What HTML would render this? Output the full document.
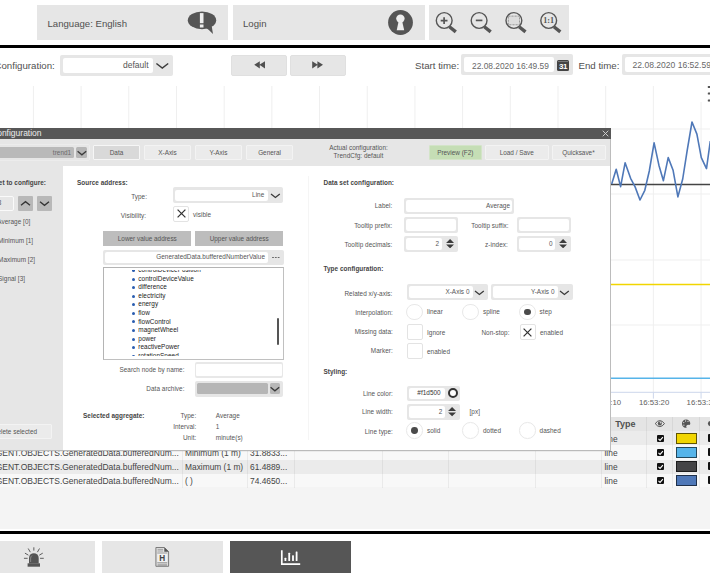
<!DOCTYPE html>
<html><head><meta charset="utf-8"><title>Trend</title>
<style>
*{box-sizing:border-box;margin:0;padding:0}
html,body{width:710px;height:580px;overflow:hidden;background:#fff;font-family:"Liberation Sans",sans-serif;color:#444}
.a{position:absolute}
.t{position:absolute;white-space:nowrap;line-height:1}
.tb{background:#e6e6e6}
.f96{font-size:9.7px;color:#505050}
.f64{font-size:6.4px;color:#555;letter-spacing:0.04px}
.b{font-weight:bold;color:#444}
.r{text-align:right}
.in{position:absolute;background:#fff;border:1px solid #e2e2e2;border-radius:2px;box-shadow:0 0 0 1px #ececec}
.btn{position:absolute;background:#ebebeb;border:1px solid #f3f3f3;border-radius:1px;font-size:6.4px;color:#555;text-align:center}
.dbtn{position:absolute;background:#bdbdbd;font-size:6.4px;color:#555;text-align:center}
.cb{position:absolute;width:16.2px;height:16.2px;background:#fff;border:1.6px solid #e3e3e3;border-radius:2px}
.rd{position:absolute;width:16.6px;height:16.6px;background:#fff;border:1.6px solid #e8e8e8;border-radius:50%}
</style></head><body>
<!-- top bar -->
<div class="a tb" style="left:37px;top:5.2px;width:191.3px;height:34.6px"></div>
<div class="a tb" style="left:233.1px;top:5.2px;width:191.8px;height:34.6px"></div>
<div class="a tb" style="left:429px;top:5.2px;width:139.5px;height:34.6px"></div>
<div class="t f96" style="left:47.5px;top:18.7px;font-size:9.6px">Language: English</div>
<div class="t f96" style="left:243px;top:18.7px;font-size:9.6px">Login</div>
<div class="a" style="left:0;top:45.4px;width:710px;height:2.8px;background:#000"></div>
<svg class="a" style="left:0;top:0" width="710" height="45" viewBox="0 0 710 45"><ellipse cx="202" cy="20.3" rx="14.2" ry="8.9" fill="#555"/><path d="M205.5 27.5 Q209.5 30 213 34 Q212.3 30 211.8 26.5 Z" fill="#555"/><rect x="199.9" y="13.1" width="3.6" height="10.1" fill="#eee"/><rect x="199.9" y="24.5" width="3.6" height="3" fill="#eee"/><circle cx="400.5" cy="22.5" r="12.4" fill="#555"/><circle cx="400.4" cy="18.6" r="4.2" fill="#eee"/><path d="M398.7 21 L402.1 21 L404.2 30.3 L396.7 30.3 Z" fill="#eee"/><circle cx="444.2" cy="20.5" r="7.9" fill="none" stroke="#555" stroke-width="1.4"/><path d="M449.4 26.7 L455.8 31.9" stroke="#555" stroke-width="3.4" fill="none"/><path d="M440.7 20.6H447.5M444.09999999999997 17.2V24" stroke="#555" stroke-width="1.7" fill="none"/><circle cx="479.1" cy="20.5" r="7.9" fill="none" stroke="#555" stroke-width="1.4"/><path d="M484.3 26.7 L490.70000000000005 31.9" stroke="#555" stroke-width="3.4" fill="none"/><path d="M475.8 20.4H482.40000000000003" stroke="#555" stroke-width="1.7" fill="none"/><circle cx="513.9" cy="20.5" r="7.9" fill="none" stroke="#555" stroke-width="1.4"/><path d="M519.1 26.7 L525.5 31.9" stroke="#555" stroke-width="3.4" fill="none"/><rect x="508.29999999999995" y="16.1" width="11.2" height="8.7" fill="#dcdcdc" stroke="#777" stroke-width="0.7" stroke-dasharray="2.2 0.9"/><circle cx="548.7" cy="20.5" r="7.9" fill="none" stroke="#555" stroke-width="1.4"/><path d="M553.9000000000001 26.7 L560.3000000000001 31.9" stroke="#555" stroke-width="3.4" fill="none"/><text x="548.7" y="23.3" text-anchor="middle" font-family="Liberation Serif, serif" font-weight="bold" font-size="8.2" fill="#555">1:1</text></svg>
<!-- config row -->

<div class="t f96 r" style="left:-50px;width:104.8px;top:60.7px">Configuration:</div>
<div class="a" style="left:60px;top:54.6px;width:113.2px;height:21.2px;background:#e6e6e6;border-radius:2px"></div>
<div class="a" style="left:62.9px;top:57.5px;width:90.5px;height:15.3px;background:#fff;border-radius:2px"></div>
<div class="t r" style="left:63px;top:61px;width:85.5px;font-size:8.5px;color:#555">default</div>
<svg class="a" style="left:154px;top:60px" width="16" height="10" viewBox="0 0 16 10"><path d="M2.4 3.5 L8.3 8.1 L14.2 3.5" fill="none" stroke="#3c3c3c" stroke-width="1.5"/></svg>
<div class="a" style="left:230.8px;top:54.6px;width:56.3px;height:21.1px;background:#e6e6e6;border:1px solid #e0e0e0;border-radius:2px"></div>
<div class="a" style="left:290px;top:54.6px;width:56.2px;height:21.1px;background:#e6e6e6;border:1px solid #e0e0e0;border-radius:2px"></div>
<svg class="a" style="left:253.8px;top:61.4px" width="11.2" height="7.6" viewBox="0 0 11.2 7.6"><path d="M5.8 0.2V7.4L0.2 3.8Z M11 0.2V7.4L5.4 3.8Z" fill="#505050"/></svg>
<svg class="a" style="left:312.3px;top:61.4px" width="11.2" height="7.6" viewBox="0 0 11.2 7.6"><path d="M0.2 0.2V7.4L5.8 3.8Z M5.4 0.2V7.4L11 3.8Z" fill="#505050"/></svg>
<div class="t f96" style="left:415px;top:60.7px">Start time:</div>
<div class="a" style="left:461px;top:54.4px;width:112.4px;height:21px;background:#e6e6e6;border-radius:2px"></div>
<div class="a" style="left:464px;top:57.3px;width:89.7px;height:15.2px;background:#fff;border-radius:2px"></div>
<div class="t" style="left:472px;top:61.5px;font-size:8.4px;color:#686868">22.08.2020 16:49.59</div>
<div class="a" style="left:557.3px;top:60px;width:11.6px;height:10.6px;background:#444;border-radius:1.5px"></div>
<div class="t" style="left:557.3px;top:62.6px;width:11.6px;height:8px;font-size:8px;font-weight:bold;color:#fff;text-align:center;line-height:8px;letter-spacing:-0.4px">31</div><div class="a" style="left:558.3px;top:60.6px;width:9.6px;height:1px;background:#777"></div>
<div class="t f96" style="left:578.5px;top:60.7px">End time:</div>
<div class="a" style="left:622px;top:54.4px;width:100px;height:21px;background:#e6e6e6;border-radius:2px"></div>
<div class="a" style="left:625px;top:57.3px;width:100px;height:15.2px;background:#fff;border-radius:2px"></div>
<div class="t" style="left:632.5px;top:61.4px;font-size:8.55px;color:#686868">22.08.2020 16:52.59</div>

<!-- chart -->
<svg class="a" style="left:0;top:80px" width="710" height="340" viewBox="0 80 710 340"><rect x="32.90" y="86" width="1" height="306" fill="#efefef"/><rect x="80.59" y="86" width="1" height="306" fill="#efefef"/><rect x="128.28" y="86" width="1" height="306" fill="#efefef"/><rect x="175.97" y="86" width="1" height="306" fill="#efefef"/><rect x="223.66" y="86" width="1" height="306" fill="#efefef"/><rect x="271.35" y="86" width="1" height="306" fill="#efefef"/><rect x="319.04" y="86" width="1" height="306" fill="#efefef"/><rect x="366.73" y="86" width="1" height="306" fill="#efefef"/><rect x="414.42" y="86" width="1" height="306" fill="#efefef"/><rect x="462.11" y="86" width="1" height="306" fill="#efefef"/><rect x="509.80" y="86" width="1" height="306" fill="#efefef"/><rect x="557.49" y="86" width="1" height="306" fill="#efefef"/><rect x="605.18" y="86" width="1" height="306" fill="#efefef"/><rect x="652.87" y="86" width="1" height="306" fill="#efefef"/><rect x="700.56" y="86" width="1" height="306" fill="#efefef"/><line x1="0" y1="129" x2="710" y2="129" stroke="#efefef" stroke-width="1"/><line x1="0" y1="194" x2="710" y2="194" stroke="#efefef" stroke-width="1"/><line x1="0" y1="260" x2="710" y2="260" stroke="#efefef" stroke-width="1"/><line x1="0" y1="325" x2="710" y2="325" stroke="#efefef" stroke-width="1"/><line x1="0" y1="392.3" x2="710" y2="392.3" stroke="#ccd6eb" stroke-width="1"/><line x1="0" y1="184.6" x2="710" y2="184.6" stroke="#444" stroke-width="1.5"/><polyline fill="none" stroke="#4f78b8" stroke-width="1.6" stroke-linejoin="round" points="611.7,184.1 616.2,169.3 620.6,186.6 625.1,162.8 630.6,178.3 635.1,186.9 640.0,200.0 644.8,190.3 649.3,171.0 654.1,142.8 658.9,165.2 663.4,180.7 668.2,157.6 673.1,170.3 677.9,196.9 682.7,179.0 687.2,150.3 692.0,122.0 696.9,134.1 701.3,157.6 706.5,168.6 710.3,141.0"/><line x1="0" y1="284.5" x2="710" y2="284.5" stroke="#f1d500" stroke-width="1.5"/><line x1="0" y1="378.3" x2="710" y2="378.3" stroke="#56b4e9" stroke-width="1.5"/><rect x="32.90" y="392.3" width="1" height="6.3" fill="#ccd6eb"/><rect x="80.59" y="392.3" width="1" height="6.3" fill="#ccd6eb"/><rect x="128.28" y="392.3" width="1" height="6.3" fill="#ccd6eb"/><rect x="175.97" y="392.3" width="1" height="6.3" fill="#ccd6eb"/><rect x="223.66" y="392.3" width="1" height="6.3" fill="#ccd6eb"/><rect x="271.35" y="392.3" width="1" height="6.3" fill="#ccd6eb"/><rect x="319.04" y="392.3" width="1" height="6.3" fill="#ccd6eb"/><rect x="366.73" y="392.3" width="1" height="6.3" fill="#ccd6eb"/><rect x="414.42" y="392.3" width="1" height="6.3" fill="#ccd6eb"/><rect x="462.11" y="392.3" width="1" height="6.3" fill="#ccd6eb"/><rect x="509.80" y="392.3" width="1" height="6.3" fill="#ccd6eb"/><rect x="557.49" y="392.3" width="1" height="6.3" fill="#ccd6eb"/><rect x="605.18" y="392.3" width="1" height="6.3" fill="#ccd6eb"/><rect x="652.87" y="392.3" width="1" height="6.3" fill="#ccd6eb"/><rect x="700.56" y="392.3" width="1" height="6.3" fill="#ccd6eb"/><g font-family="Liberation Sans, sans-serif" font-size="7.8" fill="#606060" text-anchor="middle"><text x="606" y="405.1">16:53:10</text><text x="654.1" y="405.1">16:53:20</text><text x="701.8" y="405.1">16:53:30</text></g><rect x="696" y="83" width="16" height="19" fill="#fff"/><g fill="#555"><rect x="707.8" y="85.9" width="6" height="2" rx="0.5"/><rect x="707.8" y="92.6" width="6" height="2" rx="0.5"/><rect x="707.8" y="99.4" width="6" height="2" rx="0.5"/></g></svg>
<!-- table -->
<div class="a" style="left:0;top:417px;width:710px;height:14.2px;background:#e4e4e4"></div><div class="a" style="left:0;top:431.2px;width:710px;height:14.2px;background:#ebebeb"></div><div class="a" style="left:0;top:445.4px;width:710px;height:14.2px;background:#f8f8f8"></div><div class="a" style="left:0;top:459.5px;width:710px;height:14.2px;background:#ebebeb"></div><div class="a" style="left:0;top:473.6px;width:710px;height:14.2px;background:#f8f8f8"></div><div class="a" style="left:0;top:487.3px;width:710px;height:42px;background:#f4f4f4"></div><div class="a" style="left:181.6px;top:417px;width:1px;height:70.5px;background:rgba(0,0,0,0.055)"></div><div class="a" style="left:246.6px;top:417px;width:1px;height:70.5px;background:rgba(0,0,0,0.055)"></div><div class="a" style="left:293.6px;top:417px;width:1px;height:70.5px;background:rgba(0,0,0,0.055)"></div><div class="a" style="left:382.1px;top:417px;width:1px;height:70.5px;background:rgba(0,0,0,0.055)"></div><div class="a" style="left:448.1px;top:417px;width:1px;height:70.5px;background:rgba(0,0,0,0.055)"></div><div class="a" style="left:535.1px;top:417px;width:1px;height:70.5px;background:rgba(0,0,0,0.055)"></div><div class="a" style="left:601.1px;top:417px;width:1px;height:70.5px;background:rgba(0,0,0,0.055)"></div><div class="a" style="left:646.1px;top:417px;width:1px;height:70.5px;background:rgba(0,0,0,0.055)"></div><div class="a" style="left:672.1px;top:417px;width:1px;height:70.5px;background:rgba(0,0,0,0.055)"></div><div class="a" style="left:698.6px;top:417px;width:1px;height:70.5px;background:rgba(0,0,0,0.055)"></div><div class="t" style="left:-10px;top:434.9px;font-size:8.5px;color:#444">AGENT.OBJECTS.GeneratedData.bufferedNum...</div><div class="t" style="left:185px;top:434.9px;font-size:8.4px;color:#444">Average (1 m)</div><div class="t" style="left:250px;top:434.9px;font-size:8.4px;color:#444">46.0178...</div><div class="t" style="left:604.5px;top:434.9px;font-size:8.4px;color:#444">line</div><div class="a" style="left:656.9px;top:434.6px;width:7.4px;height:7.2px;background:#111;border-radius:1px"></div><svg class="a" style="left:656.9px;top:434.5px" width="7.4" height="7.4" viewBox="0 0 8 8"><path d="M1.6 4.2 L3.3 5.8 L6.4 2.2" fill="none" stroke="#fff" stroke-width="1.2"/></svg><div class="a" style="left:676.2px;top:432.9px;width:20.9px;height:11.2px;background:#f1d500;border:1px solid rgba(0,0,0,0.6)"></div><div class="a" style="left:707.5px;top:434px;width:8px;height:8px;background:#111;border-radius:1px"></div><div class="t" style="left:-10px;top:449.1px;font-size:8.5px;color:#444">AGENT.OBJECTS.GeneratedData.bufferedNum...</div><div class="t" style="left:185px;top:449.1px;font-size:8.4px;color:#444">Minimum (1 m)</div><div class="t" style="left:250px;top:449.1px;font-size:8.4px;color:#444">31.8833...</div><div class="t" style="left:604.5px;top:449.1px;font-size:8.4px;color:#444">line</div><div class="a" style="left:656.9px;top:448.8px;width:7.4px;height:7.2px;background:#111;border-radius:1px"></div><svg class="a" style="left:656.9px;top:448.7px" width="7.4" height="7.4" viewBox="0 0 8 8"><path d="M1.6 4.2 L3.3 5.8 L6.4 2.2" fill="none" stroke="#fff" stroke-width="1.2"/></svg><div class="a" style="left:676.2px;top:447.1px;width:20.9px;height:11.2px;background:#56b4e9;border:1px solid rgba(0,0,0,0.6)"></div><div class="a" style="left:707.5px;top:448.2px;width:8px;height:8px;background:#111;border-radius:1px"></div><div class="t" style="left:-10px;top:463.2px;font-size:8.5px;color:#444">AGENT.OBJECTS.GeneratedData.bufferedNum...</div><div class="t" style="left:185px;top:463.2px;font-size:8.4px;color:#444">Maximum (1 m)</div><div class="t" style="left:250px;top:463.2px;font-size:8.4px;color:#444">61.4889...</div><div class="t" style="left:604.5px;top:463.2px;font-size:8.4px;color:#444">line</div><div class="a" style="left:656.9px;top:462.9px;width:7.4px;height:7.2px;background:#111;border-radius:1px"></div><svg class="a" style="left:656.9px;top:462.8px" width="7.4" height="7.4" viewBox="0 0 8 8"><path d="M1.6 4.2 L3.3 5.8 L6.4 2.2" fill="none" stroke="#fff" stroke-width="1.2"/></svg><div class="a" style="left:676.2px;top:461.2px;width:20.9px;height:11.2px;background:#444446;border:1px solid rgba(0,0,0,0.6)"></div><div class="a" style="left:707.5px;top:462.3px;width:8px;height:8px;background:#111;border-radius:1px"></div><div class="t" style="left:-10px;top:477.3px;font-size:8.5px;color:#444">AGENT.OBJECTS.GeneratedData.bufferedNum...</div><div class="t" style="left:185px;top:477.3px;font-size:8.4px;color:#444">( )</div><div class="t" style="left:250px;top:477.3px;font-size:8.4px;color:#444">74.4650...</div><div class="t" style="left:604.5px;top:477.3px;font-size:8.4px;color:#444">line</div><div class="a" style="left:656.9px;top:477.0px;width:7.4px;height:7.2px;background:#111;border-radius:1px"></div><svg class="a" style="left:656.9px;top:476.9px" width="7.4" height="7.4" viewBox="0 0 8 8"><path d="M1.6 4.2 L3.3 5.8 L6.4 2.2" fill="none" stroke="#fff" stroke-width="1.2"/></svg><div class="a" style="left:676.2px;top:475.3px;width:20.9px;height:11.2px;background:#4f78b8;border:1px solid rgba(0,0,0,0.6)"></div><div class="a" style="left:707.5px;top:476.4px;width:8px;height:8px;background:#111;border-radius:1px"></div><svg class="a" style="left:640px;top:416px" width="70" height="16" viewBox="640 416 70 16"><path d="M655.2 423.6 Q659.8 417.6 664.5 423.6 Q659.8 429.6 655.2 423.6 Z" fill="#e4e4e4" stroke="#555" stroke-width="1"/><circle cx="659.8" cy="423.5" r="2" fill="#555"/><circle cx="660.4" cy="422.8" r="0.7" fill="#ddd"/><path d="M686.1 419.4 A4.2 4.2 0 1 0 686.8 427.75 Q685.6 426.6 686.6 425.4 Q687.6 424.6 689.2 425 Q690.3 425 690.3 423.6 A4.2 4.2 0 0 0 686.1 419.4 Z" fill="#555"/><circle cx="683.7" cy="422.6" r="0.65" fill="#ddd"/><circle cx="685.6" cy="421" r="0.65" fill="#ddd"/><circle cx="688" cy="421.3" r="0.65" fill="#ddd"/><circle cx="683.9" cy="425.2" r="0.65" fill="#ddd"/><circle cx="710.5" cy="423.6" r="2.6" fill="#555"/></svg><div class="t" style="left:615.2px;top:419.6px;font-size:9px;font-weight:bold;color:#505050">Type</div>
<!-- dialog -->
<div class="a" style="left:-5px;top:127.8px;width:616.4px;height:322.2px;background:#e6e6e6;box-shadow:0 1px 0 #bababa,0 2px 0 rgba(0,0,0,0.05);border-right:1px solid #bcbcbc"></div><div class="a" style="left:-5px;top:127.8px;width:616.4px;height:11.1px;background:#575757"></div><div class="t r" style="left:-60px;width:101.6px;top:129px;font-size:8.5px;color:#ececec">Trend configuration</div><svg class="a" style="left:601.8px;top:129.8px" width="7" height="7" viewBox="0 0 7 7"><path d="M0.7 0.7L6.3 6.3M6.3 0.7L0.7 6.3" stroke="#d8d8d8" stroke-width="0.9" fill="none"/></svg><div class="a" style="left:-5px;top:144px;width:95px;height:17px;border:1px solid #ececec;border-radius:2px"></div><div class="a" style="left:-5px;top:146.8px;width:79.2px;height:11px;background:#b9b9b9;border-radius:1.5px"></div><div class="t f64 r" style="left:0;top:149.5px;width:71.2px;color:#6a6a6a">trend1</div><div class="a" style="left:76.4px;top:146.8px;width:10.6px;height:11px;background:#b6b6b6;border-radius:1.5px"></div><svg class="a" style="left:77.3px;top:150px" width="10" height="6" viewBox="0 0 10 6"><path d="M0.6 1.3 L4.9 4.8 L9.2 1.3" fill="none" stroke="#3a3a3a" stroke-width="1.3"/></svg><div class="btn" style="left:93px;top:145px;width:47px;height:15px;line-height:13px;background:#d9d9d9;border-color:#f6f6f6">Data</div><div class="btn" style="left:144px;top:145px;width:47px;height:15px;line-height:13px;">X-Axis</div><div class="btn" style="left:195px;top:145px;width:47px;height:15px;line-height:13px;">Y-Axis</div><div class="btn" style="left:246px;top:145px;width:47px;height:15px;line-height:13px;">General</div><div class="t f64" style="left:308.5px;top:144px;width:100px;text-align:center;line-height:8.4px">Actual configuration:<br>TrendCfg: default</div><div class="btn" style="left:428.5px;top:145px;width:53.5px;height:15px;line-height:13px;background:#c5deb5;border-color:#d3e4c8">Preview (F2)</div><div class="btn" style="left:485px;top:145px;width:63.5px;height:15px;line-height:13px">Load / Save</div><div class="btn" style="left:551.5px;top:145px;width:54px;height:15px;line-height:13px">Quicksave*</div><div class="a" style="left:63px;top:165.7px;width:547.4px;height:284.3px;background:#fff"></div><div class="a" style="left:308.1px;top:176px;width:1px;height:263.6px;background:#f5f5f5"></div><div class="t f64 b r" style="left:-40px;width:86px;top:180px">Data set to configure:</div><div class="a" style="left:-10px;top:195.8px;width:24px;height:15.2px;border:1.2px solid #fafafa;border-radius:2px"></div><div class="t f64" style="left:-2.2px;top:200px">3</div><div class="a" style="left:18px;top:196px;width:15px;height:15px;background:#b8b8b8;border-radius:1px"></div><svg class="a" style="left:20px;top:200px" width="11" height="7" viewBox="0 0 11 6.3"><path d="M1 5 L5.5 1.3 L10 5" fill="none" stroke="#333" stroke-width="1.3"/></svg><div class="a" style="left:37px;top:196px;width:15px;height:15px;background:#b8b8b8;border-radius:1px"></div><svg class="a" style="left:39px;top:200px" width="11" height="7" viewBox="0 0 11 6.3"><path d="M1 1.3 L5.5 5 L10 1.3" fill="none" stroke="#333" stroke-width="1.3"/></svg><div class="t f64 r" style="left:-50px;width:80.3px;top:219.4px">Average [0]</div><div class="t f64 r" style="left:-50px;width:83.2px;top:237.9px">Minimum [1]</div><div class="t f64 r" style="left:-50px;width:85.1px;top:256.6px">Maximum [2]</div><div class="t f64 r" style="left:-50px;width:75.1px;top:276.1px">Signal [3]</div><div class="btn" style="left:-20px;top:424.2px;width:71.6px;height:14.8px;line-height:13.6px;text-align:right;padding-right:13.6px">Delete selected</div><div class="t f64 b" style="left:77px;top:180px">Source address:</div><div class="t f64 r" style="left:100px;width:47px;top:193.5px">Type:</div><div class="t f64 r" style="left:100px;width:46px;top:212.8px">Visibility:</div><div class="a" style="left:173px;top:187.1px;width:110px;height:16px;background:#e6e6e6;border-radius:2px"></div><div class="a" style="left:175px;top:189.6px;width:92.8px;height:11.8px;background:#fff;border-radius:2px"></div><div class="t f64 r" style="left:175px;width:89.3px;top:192.1px">Line</div><svg class="a" style="left:269.5px;top:192px" width="11" height="7" viewBox="0 0 11 7"><path d="M1 2 L5.4 5.5 L9.8 2" fill="none" stroke="#3a3a3a" stroke-width="1.3"/></svg><div class="cb" style="left:173px;top:205.7px"></div><svg class="a" style="left:176.8px;top:209.4px" width="9" height="9" viewBox="0 0 9 9"><path d="M0.6 0.6L8.4 8.4M8.4 0.6L0.6 8.4" stroke="#333" stroke-width="1.25" fill="none"/></svg><div class="t f64" style="left:193px;top:211.5px">visible</div><div class="dbtn" style="left:103.3px;top:230.7px;width:88px;height:15.4px;line-height:15.4px">Lower value address</div><div class="dbtn" style="left:195px;top:230.7px;width:88.3px;height:15.4px;line-height:15.4px">Upper value address</div><div class="a" style="left:103px;top:249.6px;width:180.5px;height:15.2px;background:#e6e6e6;border-radius:2px"></div><div class="a" style="left:105px;top:251.6px;width:163px;height:11.2px;background:#fff;border-radius:2px"></div><div class="t f64 r" style="left:105px;width:160px;top:254px">GeneratedData.bufferedNumberValue</div><div class="a" style="left:272px;top:256.5px;width:1.6px;height:1.6px;background:#666;border-radius:50%;box-shadow:2.8px 0 0 #666,5.6px 0 0 #666"></div><div class="a" style="left:102.5px;top:267px;width:181.4px;height:92.6px;background:#fff;border:1.5px solid #c0c0c0;border-top-color:#b4b4b4;border-left-color:#b4b4b4"></div><div class="a" style="left:104px;top:270.3px;width:178px;height:85.6px;overflow:hidden"><div class="t" style="left:34.30000000000001px;top:-3.06px;font-size:6.4px;letter-spacing:0.05px;color:#222"><span style="position:absolute;left:-6.4px;top:1.9px;width:3px;height:3px;border-radius:50%;background:#2a5db0"></span>controlDevicePosition</div><div class="t" style="left:34.30000000000001px;top:5.50px;font-size:6.4px;letter-spacing:0.05px;color:#222"><span style="position:absolute;left:-6.4px;top:1.9px;width:3px;height:3px;border-radius:50%;background:#2a5db0"></span>controlDeviceValue</div><div class="t" style="left:34.30000000000001px;top:14.06px;font-size:6.4px;letter-spacing:0.05px;color:#222"><span style="position:absolute;left:-6.4px;top:1.9px;width:3px;height:3px;border-radius:50%;background:#2a5db0"></span>difference</div><div class="t" style="left:34.30000000000001px;top:22.62px;font-size:6.4px;letter-spacing:0.05px;color:#222"><span style="position:absolute;left:-6.4px;top:1.9px;width:3px;height:3px;border-radius:50%;background:#2a5db0"></span>electricity</div><div class="t" style="left:34.30000000000001px;top:31.18px;font-size:6.4px;letter-spacing:0.05px;color:#222"><span style="position:absolute;left:-6.4px;top:1.9px;width:3px;height:3px;border-radius:50%;background:#2a5db0"></span>energy</div><div class="t" style="left:34.30000000000001px;top:39.74px;font-size:6.4px;letter-spacing:0.05px;color:#222"><span style="position:absolute;left:-6.4px;top:1.9px;width:3px;height:3px;border-radius:50%;background:#2a5db0"></span>flow</div><div class="t" style="left:34.30000000000001px;top:48.30px;font-size:6.4px;letter-spacing:0.05px;color:#222"><span style="position:absolute;left:-6.4px;top:1.9px;width:3px;height:3px;border-radius:50%;background:#2a5db0"></span>flowControl</div><div class="t" style="left:34.30000000000001px;top:56.86px;font-size:6.4px;letter-spacing:0.05px;color:#222"><span style="position:absolute;left:-6.4px;top:1.9px;width:3px;height:3px;border-radius:50%;background:#2a5db0"></span>magnetWheel</div><div class="t" style="left:34.30000000000001px;top:65.42px;font-size:6.4px;letter-spacing:0.05px;color:#222"><span style="position:absolute;left:-6.4px;top:1.9px;width:3px;height:3px;border-radius:50%;background:#2a5db0"></span>power</div><div class="t" style="left:34.30000000000001px;top:73.98px;font-size:6.4px;letter-spacing:0.05px;color:#222"><span style="position:absolute;left:-6.4px;top:1.9px;width:3px;height:3px;border-radius:50%;background:#2a5db0"></span>reactivePower</div><div class="t" style="left:34.30000000000001px;top:82.54px;font-size:6.4px;letter-spacing:0.05px;color:#222"><span style="position:absolute;left:-6.4px;top:1.9px;width:3px;height:3px;border-radius:50%;background:#2a5db0"></span>rotationSpeed</div></div><div class="a" style="left:276.7px;top:317.5px;width:2.5px;height:27.3px;background:#555;border-radius:1.2px"></div><div class="t f64 r" style="left:100px;width:84.5px;top:367px">Search node by name:</div><div class="a" style="left:194.5px;top:362px;width:88.8px;height:15.8px;background:#e8e8e8;border-radius:2px"></div><div class="a" style="left:196.1px;top:363.6px;width:85.6px;height:12.6px;background:#fff;border-radius:1px"></div><div class="t f64 r" style="left:100px;width:84.5px;top:386px">Data archive:</div><div class="a" style="left:194.5px;top:380.7px;width:88.8px;height:16px;background:#e6e6e6;border-radius:2px"></div><div class="a" style="left:196.7px;top:383px;width:71.3px;height:11.4px;background:#b6b6b6;border-radius:1.5px"></div><div class="a" style="left:270px;top:383px;width:10.2px;height:11.4px;background:#b8b8b8;border-radius:1.5px"></div><svg class="a" style="left:270.3px;top:386.2px" width="10" height="6" viewBox="0 0 10 6"><path d="M0.6 1.3 L4.9 4.8 L9.2 1.3" fill="none" stroke="#3a3a3a" stroke-width="1.3"/></svg><div class="t f64 b" style="left:83px;top:412.5px">Selected aggregate:</div><div class="t f64 r" style="left:150px;width:46.3px;top:412.5px">Type:</div><div class="t f64" style="left:215.8px;top:412.5px">Average</div><div class="t f64 r" style="left:150px;width:46.3px;top:423.8px">Interval:</div><div class="t f64" style="left:215.8px;top:423.8px">1</div><div class="t f64 r" style="left:150px;width:46.3px;top:434.7px">Unit:</div><div class="t f64" style="left:215.8px;top:434.7px">minute(s)</div><div class="t f64 b" style="left:323.5px;top:180.1px">Data set configuration:</div><div class="t f64 r" style="left:292.4px;width:100px;top:202.6px">Label:</div><div class="a" style="left:404px;top:198.2px;width:110px;height:15.7px;background:#e6e6e6;border-radius:2px"></div><div class="a" style="left:406px;top:200.2px;width:106px;height:11.7px;background:#fff;border-radius:2px"></div><div class="t f64 r" style="left:406px;width:104px;top:203.1px">Average</div><div class="t f64 r" style="left:292.4px;width:100px;top:222.8px">Tooltip prefix:</div><div class="a" style="left:404px;top:217.1px;width:53.5px;height:15.8px;background:#e6e6e6;border-radius:2px"></div><div class="a" style="left:406px;top:219.1px;width:49.5px;height:11.8px;background:#fff;border-radius:2px"></div><div class="t f64 r" style="left:408.7px;width:100px;top:222.8px">Tooltip suffix:</div><div class="a" style="left:517.2px;top:217.1px;width:53.6px;height:15.8px;background:#e6e6e6;border-radius:2px"></div><div class="a" style="left:519.2px;top:219.1px;width:49.6px;height:11.8px;background:#fff;border-radius:2px"></div><div class="t f64 r" style="left:292.4px;width:100px;top:241.8px">Tooltip decimals:</div><div class="a" style="left:404px;top:235.7px;width:53.5px;height:16px;background:#e6e6e6;border-radius:2px"></div><div class="a" style="left:406px;top:237.7px;width:36px;height:12px;background:#fff;border-radius:2px"></div><div class="t f64 r" style="left:406px;width:33px;top:240.9px">2</div><svg class="a" style="left:445.5px;top:238.9px" width="8.2" height="9.4" viewBox="0 0 8.2 9.4"><path d="M4.1 0.1L8.1 4H0.1Z M4.1 9.3L8.1 5.4H0.1Z" fill="#3c3c3c"/></svg><div class="t f64 r" style="left:407.8px;width:100px;top:241.8px">z-index:</div><div class="a" style="left:517.2px;top:235.7px;width:53.6px;height:16px;background:#e6e6e6;border-radius:2px"></div><div class="a" style="left:519.2px;top:237.7px;width:36.3px;height:12px;background:#fff;border-radius:2px"></div><div class="t f64 r" style="left:519.5px;width:33px;top:240.9px">0</div><svg class="a" style="left:558.8px;top:238.9px" width="8.2" height="9.4" viewBox="0 0 8.2 9.4"><path d="M4.1 0.1L8.1 4H0.1Z M4.1 9.3L8.1 5.4H0.1Z" fill="#3c3c3c"/></svg><div class="t f64 b" style="left:323.5px;top:265.8px">Type configuration:</div><div class="t f64 r" style="left:292.4px;width:100px;top:290.8px">Related x/y-axis:</div><div class="a" style="left:407px;top:284.2px;width:81px;height:15.8px;background:#e6e6e6;border-radius:2px"></div><div class="a" style="left:409px;top:286.2px;width:63.5px;height:11.8px;background:#fff;border-radius:2px"></div><div class="t f64 r" style="left:409px;width:60.5px;top:289px">X-Axis 0</div><svg class="a" style="left:474.4px;top:289px" width="11" height="7" viewBox="0 0 11 7"><path d="M1 2 L5.4 5.5 L9.8 2" fill="none" stroke="#3a3a3a" stroke-width="1.3"/></svg><div class="a" style="left:491px;top:284.2px;width:82px;height:15.8px;background:#e6e6e6;border-radius:2px"></div><div class="a" style="left:493px;top:286.2px;width:64.5px;height:11.8px;background:#fff;border-radius:2px"></div><div class="t f64 r" style="left:493px;width:61.5px;top:289px">Y-Axis 0</div><svg class="a" style="left:559.4px;top:289px" width="11" height="7" viewBox="0 0 11 7"><path d="M1 2 L5.4 5.5 L9.8 2" fill="none" stroke="#3a3a3a" stroke-width="1.3"/></svg><div class="t f64 r" style="left:292.8px;width:100px;top:310.1px">Interpolation:</div><div class="rd" style="left:406.4px;top:303.7px"></div><div class="t f64" style="left:427.0px;top:308.9px">linear</div><div class="rd" style="left:462.4px;top:303.7px"></div><div class="t f64" style="left:483.0px;top:308.9px">spline</div><div class="rd" style="left:519.0px;top:303.7px"></div><div class="a" style="left:523.9px;top:308.6px;width:6.8px;height:6.8px;border-radius:50%;background:#4a4a4a"></div><div class="t f64" style="left:539.6px;top:308.9px">step</div><div class="t f64 r" style="left:292.8px;width:100px;top:329.1px">Missing data:</div><div class="cb" style="left:406.8px;top:323.8px"></div><div class="t f64" style="left:427px;top:329.9px">Ignore</div><div class="t f64 r" style="left:409.5px;width:100px;top:329.9px">Non-stop:</div><div class="cb" style="left:519.8px;top:323.8px"></div><svg class="a" style="left:523.3px;top:327.9px" width="9" height="9" viewBox="0 0 9 9"><path d="M0.6 0.6L8.4 8.4M8.4 0.6L0.6 8.4" stroke="#333" stroke-width="1.25" fill="none"/></svg><div class="t f64" style="left:540px;top:329.9px">enabled</div><div class="t f64 r" style="left:292.8px;width:100px;top:348.1px">Marker:</div><div class="cb" style="left:406.8px;top:343.1px"></div><div class="t f64" style="left:427px;top:348.8px">enabled</div><div class="t f64 b" style="left:323.5px;top:368.8px">Styling:</div><div class="t f64 r" style="left:292.9px;width:100px;top:390.5px">Line color:</div><div class="a" style="left:406.5px;top:385.6px;width:53.5px;height:15.3px;background:#e6e6e6;border-radius:2px"></div><div class="a" style="left:408.5px;top:387.6px;width:36.5px;height:11.3px;background:#fff;border-radius:2px"></div><div class="t f64" style="left:417.3px;top:390px;color:#333">#f1d500</div><div class="a" style="left:447.8px;top:388.1px;width:10px;height:10px;border-radius:50%;border:2.3px solid #333;background:#fff"></div><div class="t f64 r" style="left:292.9px;width:100px;top:409.3px">Line width:</div><div class="a" style="left:406.5px;top:404.4px;width:53.5px;height:15.3px;background:#e6e6e6;border-radius:2px"></div><div class="a" style="left:408.5px;top:406.4px;width:36.5px;height:11.3px;background:#fff;border-radius:2px"></div><div class="t f64 r" style="left:409px;width:33.4px;top:409px">2</div><svg class="a" style="left:448px;top:407.4px" width="8.2" height="9.4" viewBox="0 0 8.2 9.4"><path d="M4.1 0.1L8.1 4H0.1Z M4.1 9.3L8.1 5.4H0.1Z" fill="#3c3c3c"/></svg><div class="t f64" style="left:469.5px;top:408.6px">[px]</div><div class="t f64 r" style="left:292.9px;width:100px;top:429.1px">Line type:</div><div class="rd" style="left:406.4px;top:422.3px"></div><div class="a" style="left:411.3px;top:427.2px;width:6.8px;height:6.8px;border-radius:50%;background:#4a4a4a"></div><div class="t f64" style="left:427.0px;top:428.1px">solid</div><div class="rd" style="left:462.4px;top:422.3px"></div><div class="t f64" style="left:483.0px;top:428.1px">dotted</div><div class="rd" style="left:519.0px;top:422.3px"></div><div class="t f64" style="left:539.6px;top:428.1px">dashed</div>
<!-- bottom -->
<div class="a" style="left:0;top:530.9px;width:710px;height:2.8px;background:#000"></div><div class="a tb" style="left:-26px;top:541px;width:120.6px;height:32px"></div><div class="a tb" style="left:102px;top:541px;width:120.7px;height:32px"></div><div class="a" style="left:230px;top:541px;width:121.4px;height:32px;background:#565656"></div><svg class="a" style="left:0;top:540px" width="360" height="40" viewBox="0 540 360 40"><line x1="27.65" y1="558.30" x2="23.95" y2="558.30" stroke="#5e5e5e" stroke-width="1"/><line x1="40.05" y1="558.30" x2="43.75" y2="558.30" stroke="#5e5e5e" stroke-width="1"/><line x1="28.39" y1="555.15" x2="24.93" y2="553.15" stroke="#5e5e5e" stroke-width="1"/><line x1="39.31" y1="555.15" x2="42.77" y2="553.15" stroke="#5e5e5e" stroke-width="1"/><line x1="30.30" y1="552.15" x2="28.20" y2="548.51" stroke="#5e5e5e" stroke-width="1"/><line x1="37.40" y1="552.15" x2="39.50" y2="548.51" stroke="#5e5e5e" stroke-width="1"/><line x1="33.85" y1="550.60" x2="33.85" y2="547.30" stroke="#5e5e5e" stroke-width="1"/><rect x="27.6" y="563.3" width="12.4" height="3.4" fill="#555"/><path d="M29 563.5 V558 A4.85 4.85 0 0 1 38.7 558 V563.5 Z" fill="#555"/><path d="M30.6 562 V558.2 A3.4 3.4 0 0 1 32 555.6" stroke="#bbb" stroke-width="0.5" fill="none"/><path d="M155.9 547.5 H164.3 L168.6 551.8 V566.3 H155.9 Z" fill="#dedede" stroke="#707070" stroke-width="0.9"/><path d="M164.3 547.2 L168.9 551.8 H164.3 Z" fill="#555"/><rect x="157.3" y="554" width="9.9" height="8" fill="#f0f0f0"/><line x1="157.6" y1="549.4" x2="163" y2="549.4" stroke="#808080" stroke-width="0.6"/><line x1="157.6" y1="551" x2="163" y2="551" stroke="#808080" stroke-width="0.6"/><line x1="157.3" y1="553" x2="167.2" y2="553" stroke="#808080" stroke-width="0.6"/><line x1="157.3" y1="562.6" x2="167.2" y2="562.6" stroke="#808080" stroke-width="0.6"/><line x1="157.6" y1="564.2" x2="167" y2="564.2" stroke="#808080" stroke-width="0.6"/><line x1="157.6" y1="565.3" x2="167" y2="565.3" stroke="#808080" stroke-width="0.6"/><text x="162.15" y="561.2" text-anchor="middle" font-family="Liberation Sans, sans-serif" font-weight="bold" font-size="8.2" fill="#444">H</text><path d="M281.8 550.2 V564.2 H300.2" fill="none" stroke="#fff" stroke-width="1.7"/><rect x="284.5" y="557.8" width="1.8" height="3.1" rx="0.5" fill="#fff"/><rect x="288.3" y="552.8" width="1.8" height="8.1" rx="0.5" fill="#fff"/><rect x="292.1" y="555.3" width="1.8" height="5.6" rx="0.5" fill="#fff"/><rect x="295.70000000000005" y="551.5" width="1.8" height="9.4" rx="0.5" fill="#fff"/></svg>
</body></html>
